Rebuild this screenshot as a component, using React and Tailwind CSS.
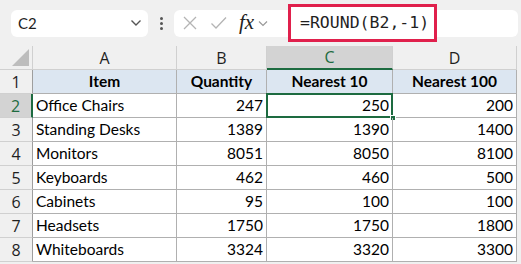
import React from "react";

const rows = [
  ["Office Chairs", 247, 250, 200],
  ["Standing Desks", 1389, 1390, 1400],
  ["Monitors", 8051, 8050, 8100],
  ["Keyboards", 462, 460, 500],
  ["Cabinets", 95, 100, 100],
  ["Headsets", 1750, 1750, 1800],
  ["Whiteboards", 3324, 3320, 3300],
];

const cols = ["A", "B", "C", "D"];

function TopBar() {
  return (
    <div className="h-[46px] flex items-center relative">
      <div className="ml-[11px] w-[137px] h-[27px] bg-white rounded-md flex items-center justify-between pl-[7px] pr-[6px]">
        <span className="text-[15px] text-[#1f1f1f]">C2</span>
        <svg width="12" height="8" viewBox="0 0 12 8" fill="none" stroke="#555" strokeWidth="1.4">
          <path d="M1.5 1.5 L6 6 L10.5 1.5" />
        </svg>
      </div>
      <div className="ml-[12px] flex flex-col gap-[2px]">
        <span className="w-[3px] h-[3px] bg-[#555] rounded-full" />
        <span className="w-[3px] h-[3px] bg-[#555] rounded-full" />
        <span className="w-[3px] h-[3px] bg-[#555] rounded-full" />
      </div>
      <div className="ml-[11px] w-[120px] h-[27px] bg-white rounded-l-md flex items-center pl-[8px]">
        <svg width="16" height="16" viewBox="0 0 16 16" fill="none" stroke="#b4b4b4" strokeWidth="1.3">
          <path d="M2 2 L14 14 M14 2 L2 14" />
        </svg>
        <svg className="ml-[12px]" width="17" height="16" viewBox="0 0 17 16" fill="none" stroke="#b4b4b4" strokeWidth="1.3">
          <path d="M1.5 8.5 L6 13 L16 2.5" />
        </svg>
        <span className="ml-[12px] text-[21px] italic text-[#222] font-['Liberation_Serif',serif] leading-none pb-[2px]">fx</span>
        <svg className="ml-[4px]" width="10" height="7" viewBox="0 0 10 7" fill="none" stroke="#999" strokeWidth="1.2">
          <path d="M1 1.5 L5 5.5 L9 1.5" />
        </svg>
      </div>
      <div className="ml-[-2px] flex-1 mr-[3px] h-[27px] bg-white rounded-md" />
      <div className="absolute left-[288px] top-[4px] w-[149px] h-[38px] border-[3px] border-[#e0204c] bg-white flex items-center pl-[9px]">
        <span className="text-[16.5px] text-[#1f1f1f] font-['DejaVu_Sans_Mono',monospace]">=ROUND(B2,-1)</span>
      </div>
    </div>
  );
}

export default function App() {
  return (
    <div className="w-[521px] h-[264px] bg-[#f0f0f0] overflow-hidden font-['Lato',sans-serif]">
      <TopBar />
      <div className="grid grid-cols-[33px_144px_90px_126px_124px] bg-white w-[517px]">
        <div className="h-[24px] bg-[#f0f0f0] border-r border-b border-[#d0d0d0] relative flex items-end justify-end pr-[3px] pb-[3px]">
          <div className="w-0 h-0 border-l-[17px] border-l-transparent border-b-[17px] border-b-[#bdbdbd]" />
        </div>
        {cols.map((c) =>
          c === "C" ? (
            <div key={c} className="h-[24px] bg-[#d3d3d3] border-r border-[#d0d0d0] border-b-2 border-b-[#1d6b40] flex items-center justify-center text-[16px] text-[#1d6b40] font-['Open_Sans',sans-serif]">
              {c}
            </div>
          ) : (
            <div key={c} className="h-[24px] bg-[#f0f0f0] border-r border-b border-[#d0d0d0] flex items-center justify-center text-[16px] text-[#1f1f1f] font-['Open_Sans',sans-serif]">
              {c}
            </div>
          )
        )}

        <div className="h-[24px] bg-[#f0f0f0] border-r border-b border-r-[#9e9e9e] border-b-[#d0d0d0] flex items-center justify-center text-[16px] text-[#1f1f1f] font-['Open_Sans',sans-serif]">
          1
        </div>
        {["Item", "Quantity", "Nearest 10", "Nearest 100"].map((h) => (
          <div key={h} className="h-[24px] bg-[#dce6f1] border-r border-b border-[#b0b0b0] flex items-center justify-center text-[15.5px] font-bold text-black">
            {h}
          </div>
        ))}

        {rows.map((r, i) => {
          const n = i + 2;
          const sel = n === 2;
          return (
            <React.Fragment key={n}>
              <div
                className={
                  sel
                    ? "h-[24px] bg-[#d3d3d3] border-r-2 border-r-[#1d6b40] border-b border-b-[#d0d0d0] flex items-center justify-center text-[16px] text-[#1d6b40] font-['Open_Sans',sans-serif]"
                    : "h-[24px] bg-[#f0f0f0] border-r border-b border-r-[#9e9e9e] border-b-[#d0d0d0] flex items-center justify-center text-[16px] text-[#1f1f1f] font-['Open_Sans',sans-serif]"
                }
              >
                {n}
              </div>
              <div className="h-[24px] border-r border-b border-[#b0b0b0] flex items-center pl-[3px] text-[15.5px] text-black">
                {r[0]}
              </div>
              <div className="h-[24px] border-r border-b border-[#b0b0b0] flex items-center justify-end pr-[3px] text-[15.5px] text-black">
                {r[1]}
              </div>
              <div className="h-[24px] border-r border-b border-[#b0b0b0] flex items-center justify-end pr-[3px] text-[15.5px] text-black relative">
                {r[2]}
                {sel && (
                  <>
                    <div className="absolute -left-px -top-px right-[-1px] bottom-[-1px] border-2 border-[#1d6b40]" />
                    <div className="absolute right-[-4px] bottom-[-4px] w-[6px] h-[6px] bg-[#1d6b40] border border-white" />
                  </>
                )}
              </div>
              <div className="h-[24px] border-r border-b border-[#b0b0b0] flex items-center justify-end pr-[3px] text-[15.5px] text-black">
                {r[3]}
              </div>
            </React.Fragment>
          );
        })}
      </div>
    </div>
  );
}
